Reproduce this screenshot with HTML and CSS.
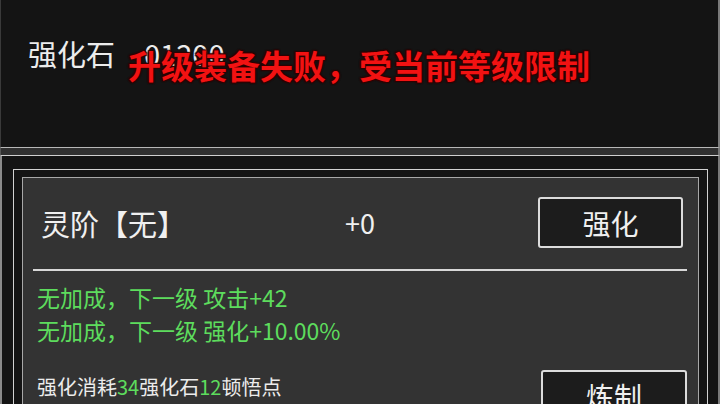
FILE: index.html
```html
<!DOCTYPE html>
<html lang="zh">
<head>
<meta charset="utf-8">
<link rel="stylesheet" href="styles.css">
</head>
<body>
<div class="top">
  <div class="stone">
    <span class="stone-label">强化石</span>
    <span class="stone-num">01200</span>
  </div>
  <div class="toast">升级装备失败，受当前等级限制</div>
</div>
<div class="band"></div>
<div class="main">
  <div class="outer">
    <div class="panel">
      <div class="row1">
        <span class="name">灵阶【无】</span>
        <span class="lvl">+0</span>
        <button class="btn btn1">强化</button>
      </div>
      <div class="sep"></div>
      <div class="green">无加成，下一级 攻击+42</div>
      <div class="green">无加成，下一级 强化+10.00%</div>
      <div class="row2">
        <span class="cost">强化消耗<span class="g">34</span>强化石<span class="g">12</span>顿悟点</span>
        <button class="btn btn2">炼制</button>
      </div>
    </div>
  </div>
</div>
</body>
</html>
```
FILE: styles.css
```css
html, body {
  margin: 0;
  padding: 0;
  background: #141414;
  width: 720px;
  height: 404px;
  overflow: hidden;
  font-family: "Noto Sans CJK SC", "Noto Sans", sans-serif;
}
.top {
  position: relative;
  height: 148px;
  box-sizing: border-box;
  border-left: 1px solid #3a3a3a;
  border-right: 2px solid #7a7a7a;
  border-bottom: 1px solid #b8b8b8;
  background: #141414;
}
.stone {
  display: flex;
  align-items: center;
  padding: 33px 0 0 27px;
  height: 40px;
  color: #ececec;
  font-size: 29px;
  line-height: 40px;
}
.stone-num {
  margin-left: 29px;
}
.toast {
  position: absolute;
  left: 127px;
  top: 44px;
  font-size: 33px;
  line-height: 42px;
  font-weight: 700;
  color: #f21212;
  white-space: nowrap;
  text-shadow: 0 0 2px #2a0000, 1px 1px 1px #300, -1px -1px 1px #300, 1px -1px 1px #300, -1px 1px 1px #300;
}
.band {
  height: 8px;
  box-sizing: border-box;
  background: #303030;
  border-left: 1px solid #555;
  border-right: 2px solid #777;
  border-bottom: 1px solid #cfcfcf;
}
.main {
  box-sizing: border-box;
  height: 248px;
  border-left: 2px solid #8a8a8a;
  border-right: 2px solid #7a7a7a;
  padding: 13px 10px 0 11px;
}
.outer {
  border: 1px solid #d2d2d2;
  border-bottom: none;
  padding: 7px 8px 0 8px;
  height: 240px;
  box-sizing: border-box;
}
.panel {
  background: #333333;
  border: 1px solid #a8a8a8;
  border-bottom: none;
  height: 240px;
  box-sizing: border-box;
}
.row1 {
  display: flex;
  align-items: center;
  padding: 19px 15px 0 18px;
}
.name {
  width: 304px;
  color: #f0f0f0;
  font-size: 29px;
  line-height: 50px;
}
.lvl {
  color: #f0f0f0;
  font-size: 27px;
  line-height: 50px;
}
.btn {
  margin-left: auto;
  width: 145px;
  height: 51px;
  box-sizing: border-box;
  background: #1c1c1c;
  border: 2px solid #dcdcdc;
  border-radius: 3px;
  color: #f0f0f0;
  font-family: "Noto Sans CJK SC", "Noto Sans", sans-serif;
  font-size: 28px;
  padding: 0;
}
.sep {
  margin: 21px 11px 0 10px;
  height: 2px;
  background: #d8d8d8;
}
.green {
  color: #5ddc5d;
  font-size: 23px;
  line-height: 33px;
  padding-left: 14px;
}
.sep + .green {
  margin-top: 10px;
}
.row2 {
  display: flex;
  align-items: flex-start;
  margin-top: 23px;
  padding: 0 11px 0 14px;
}
.cost {
  color: #ececec;
  font-size: 20px;
  line-height: 26px;
  margin-top: 4px;
}
.g {
  color: #5ddc5d;
}
.btn2 {
  width: 146px;
}
```
